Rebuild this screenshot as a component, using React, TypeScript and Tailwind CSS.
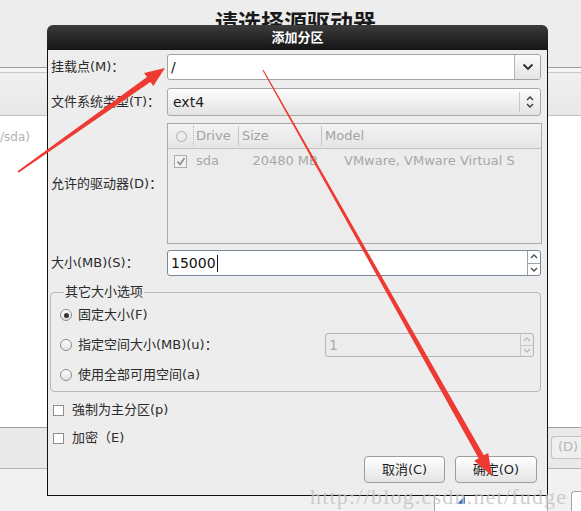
import React from 'react';

const ui = "font-['DejaVu_Sans','Noto_Sans_CJK_SC',sans-serif]";

const ChevronDown = () => (
  <svg width="12" height="8" viewBox="0 0 12 8">
    <path d="M1.5 1.5 L6 6 L10.5 1.5" fill="none" stroke="#2a2a2a" strokeWidth="1.8" />
  </svg>
);

const UpDown = ({ color = '#3a3a3a' }: { color?: string }) => (
  <svg width="8" height="14" viewBox="0 0 8 14">
    <path d="M1 5 L4 2 L7 5" fill="none" stroke={color} strokeWidth="1.4" />
    <path d="M1 9 L4 12 L7 9" fill="none" stroke={color} strokeWidth="1.4" />
  </svg>
);

const SpinButtons = ({ color, border }: { color: string; border: string }) => (
  <div className={`flex w-[13px] flex-col border-l ${border}`}>
    <div className={`flex flex-1 items-center justify-center border-b ${border}`}>
      <svg width="8" height="5" viewBox="0 0 8 5">
        <path d="M1 4 L4 1 L7 4" fill="none" stroke={color} strokeWidth="1.3" />
      </svg>
    </div>
    <div className="flex flex-1 items-center justify-center">
      <svg width="8" height="5" viewBox="0 0 8 5">
        <path d="M1 1 L4 4 L7 1" fill="none" stroke={color} strokeWidth="1.3" />
      </svg>
    </div>
  </div>
);

const Radio = ({ checked }: { checked?: boolean }) => (
  <span className="flex h-[12px] w-[12px] items-center justify-center rounded-full border border-[#8c8c8c] bg-linear-to-b from-white to-[#e2e2e2]">
    {checked && <span className="h-[5px] w-[5px] rounded-full bg-[#333]" />}
  </span>
);

const Check = () => (
  <span className="h-[11px] w-[11px] border border-[#8e8e8e] bg-white" />
);

const Label = ({ children }: { children: React.ReactNode }) => (
  <div className="flex items-center text-[13px] text-[#2b2b2b]">{children}</div>
);

// the two red annotation arrows drawn over the screenshot
const Arrows = () => (
  <svg className="pointer-events-none absolute left-0 top-0" width="581" height="511" viewBox="0 0 581 511">
    <polygon
      fill="#ee3a32"
      points="18.5,172.7 150.4,81.9 153.3,86 165,68 144.1,73 147,77.1 17.5,171.3"
    />
    <polygon
      fill="#ee3a32"
      points="263.5,69.7 483.8,455.3 488.2,452.9 492,476 474.2,460.7 478.6,458.3 262.5,70.3"
    />
  </svg>
);

export default function App() {
  return (
    <div className={`relative h-[511px] w-[581px] overflow-hidden bg-[#ededed] ${ui}`}>
      {/* page behind the dialog, partly hidden by it */}
      <div className="flex h-full flex-col">
        <div className="h-[68px] pl-[10px] pt-[12px] text-center text-[23px] font-bold leading-none text-[#1a1a1a]">
          请选择源驱动器
        </div>
        <div className="h-[5px] border-t border-[#9b9b9b] bg-[#f4f4f4]" />
        <div className="h-[44px] border-t border-[#c8c8c8] bg-linear-to-b from-[#f0f0f0] to-[#e7e7e7]" />
        <div className="h-[318px] border-t border-[#c4c4c4] bg-white pt-[12px] text-[12px] text-[#b0b0b0]">
          /sda)
        </div>
        <div className="flex h-[42px] justify-end border-t border-[#a0a0a0] bg-[#e9e9e9] pt-[8px]">
          <div className="flex h-[23px] w-[30px] items-center rounded-l-[3px] border border-r-0 border-[#c4c4c4] bg-[#efefef] pl-[6px] text-[13px] text-[#b5b5b5]">
            (D)
          </div>
        </div>
        <div className="flex flex-1 gap-[23px] border-t border-[#b4b4b4] bg-[#f1f1f1] pl-[434px] pt-[22px]">
          <div className="flex h-[20px] w-[114px] rounded-t-[4px] border border-b-0 border-[#a5a5a5] bg-white pl-[22px] pt-[4px]">
            <svg width="8" height="8" viewBox="0 0 8 8">
              <polygon points="8,0 8,8 0,8" fill="#3a6fc4" />
            </svg>
          </div>
          <div className="h-[20px] flex-1 rounded-tl-[4px] border border-b-0 border-r-0 border-[#a5a5a5] bg-white" />
        </div>
      </div>

      {/* dialog window */}
      <div className="absolute left-[47px] top-[25px] flex h-[471px] w-[501px] flex-col">
        <div className="flex h-[25px] items-center justify-center rounded-t-[6px] bg-linear-to-b from-[#3c3c3c] to-[#151515] text-[13px] font-bold text-white">
          添加分区
        </div>
        <div className="flex flex-1 flex-col border-x border-b border-[#111] bg-[#ededed] pl-[3px] pr-[6px] pt-[4px]">
          <div className="grid grid-cols-[116px_1fr]">
            <Label>挂载点(M)：</Label>
            <div className="flex h-[26px] overflow-hidden rounded-[3px] border border-[#a3a3a3] bg-white">
              <div className="flex flex-1 items-center pl-[3px] text-[14px] text-[#111]">/</div>
              <div className="flex w-[26px] items-center justify-center border-l border-[#b5b5b5] bg-linear-to-b from-[#fbfbfb] to-[#e4e4e4]">
                <ChevronDown />
              </div>
            </div>

            <div className="col-span-2 h-[8px]" />
            <Label>文件系统类型(T)：</Label>
            <div className="flex h-[28px] rounded-[3px] border border-[#a8a8a8] bg-linear-to-b from-[#fdfdfd] to-[#e3e3e3]">
              <div className="flex flex-1 items-center pl-[5px] text-[14px] text-[#1a1a1a]">ext4</div>
              <div className="my-[3px] w-px bg-[#c6c6c6]" />
              <div className="flex w-[20px] items-center justify-center">
                <UpDown />
              </div>
            </div>

            <div className="col-span-2 h-[7px]" />
            <Label>允许的驱动器(D)：</Label>
            <div className="-mr-px h-[121px] border border-[#a9a9a9] bg-[#ececec] text-[13px]">
              <div className="flex h-[25px] items-center border-b border-[#c2c2c2] bg-linear-to-b from-[#f3f3f3] to-[#e6e6e6] text-[#a2a2a2]">
                <div className="flex w-[25px] justify-center pl-[1px]">
                  <span className="h-[11px] w-[11px] rounded-full border border-[#ababab]" />
                </div>
                <div className="flex w-[45px] items-center border-l border-dotted border-[#b8b8b8] pl-[2px]">Drive</div>
                <div className="flex w-[83px] items-center border-l border-[#c6c6c6] pl-[3px]">Size</div>
                <div className="flex flex-1 items-center border-l border-[#c6c6c6] pl-[3px]">Model</div>
              </div>
              <div className="flex h-[24px] items-center text-[#a8a8a8]">
                <div className="w-[25px] pl-[6px]">
                  <span className="flex h-[13px] w-[13px] items-center justify-center border border-[#adadad] bg-[#f2f2f2]">
                    <svg width="10" height="9" viewBox="0 0 10 9">
                      <path d="M1.5 4.5 L4 7.5 L8.5 1" fill="none" stroke="#8a8a8a" strokeWidth="1.6" />
                    </svg>
                  </span>
                </div>
                <div className="w-[45px] pl-[3px]">sda</div>
                <div className="w-[83px] pr-[3px] text-right">20480 MB</div>
                <div className="flex-1 pl-[23px] whitespace-nowrap">VMware, VMware Virtual S</div>
              </div>
            </div>

            <div className="col-span-2 h-[6px]" />
            <Label>大小(MB)(S)：</Label>
            <div className="flex h-[26px] rounded-[3px] border border-[#7a8794] bg-white">
              <div className="flex flex-1 items-center pl-[3px] text-[14px] text-[#111]">
                15000<span className="ml-px h-[17px] w-px bg-[#111]" />
              </div>
              <SpinButtons color="#4a4a4a" border="border-[#9aa4ad]" />
            </div>
          </div>

          <fieldset className="-ml-px mt-[8px] h-[108px] rounded-[4px] border border-[#b8b8b8] pb-[2px] pl-[9px] pr-[6px]">
            <legend className="ml-[4px] px-px text-[13px] leading-[16px] text-[#2b2b2b]">其它大小选项</legend>
            <div className="flex h-[30px] items-center gap-[6px] text-[13px] text-[#2b2b2b]">
              <Radio checked />
              固定大小(F)
            </div>
            <div className="flex h-[30px] items-center gap-[6px] text-[13px] text-[#2b2b2b]">
              <Radio />
              指定空间大小(MB)(u)：
              <div className="ml-auto flex h-[24px] w-[209px] rounded-[3px] border border-[#b6b6b6] bg-[#ececec]">
                <div className="flex flex-1 items-center pl-[3px] text-[14px] text-[#ababab]">1</div>
                <SpinButtons color="#b8b8b8" border="border-[#c8c8c8]" />
              </div>
            </div>
            <div className="flex h-[30px] items-center gap-[6px] text-[13px] text-[#2b2b2b]">
              <Radio />
              使用全部可用空间(a)
            </div>
          </fieldset>

          <div className="mt-[4px] flex h-[28px] items-center gap-[8px] pl-[2px] text-[13px] text-[#2b2b2b]">
            <Check />
            強制为主分区(p)
          </div>
          <div className="flex h-[28px] items-center gap-[8px] pl-[2px] text-[13px] text-[#2b2b2b]">
            <Check />
            加密（E)
          </div>

          <div className="mt-[4px] flex justify-end gap-[10px] pr-[4px]">
            <button className="h-[27px] w-[81px] rounded-[4px] border border-[#9c9c9c] bg-linear-to-b from-white to-[#e4e4e4] text-[13px] text-[#1f1f1f]">
              取消(C)
            </button>
            <button className="h-[27px] w-[82px] rounded-[4px] border border-[#9c9c9c] bg-linear-to-b from-white to-[#e4e4e4] text-[13px] text-[#1f1f1f]">
              确定(O)
            </button>
          </div>
        </div>
      </div>

      <div className="pointer-events-none absolute left-[310px] top-[480px] font-['Liberation_Serif',serif] text-[22px] tracking-[1.2px] text-[#c4c4c4] opacity-80">
        http://blog.csdn.net/fudge
      </div>

      <Arrows />
    </div>
  );
}
